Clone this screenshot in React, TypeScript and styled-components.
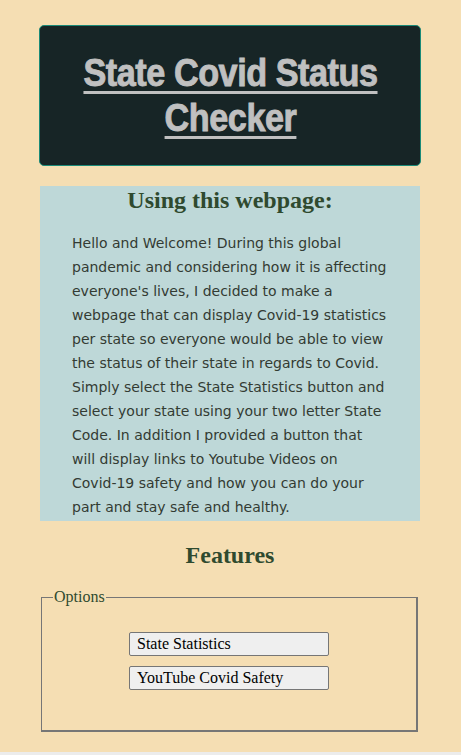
import React from "react";
import styled, { createGlobalStyle } from "styled-components";

const Global = createGlobalStyle`
  html { background: #ececec; }
  body { margin: 0; background: #ececec; }
`;

const Page = styled.div`
  background: #f5deb3;
  min-height: 752px;
  padding: 25px 40px 20px 39px;
  box-sizing: border-box;
  font-family: "Liberation Serif", "Times New Roman", serif;
`;

const Header = styled.header`
  background: #172526;
  border: 1px solid #1a8a78;
  border-radius: 5px;
  height: 141px;
  box-sizing: border-box;
  display: flex;
  align-items: center;
  justify-content: center;
`;

const Title = styled.h1`
  margin: 0;
  flex: none;
  font-family: Impact, "Liberation Sans", Arial, sans-serif;
  font-weight: bold;
  font-size: 38px;
  line-height: 45px;
  letter-spacing: -0.5px;
  color: #c0c0c0;
  -webkit-text-stroke: 0.9px #c0c0c0;
  text-decoration: underline;
  text-decoration-thickness: 3px;
  text-underline-offset: 5px;
  text-align: center;
  width: 345px;
  transform: scaleX(0.9);
`;

const Intro = styled.section`
  margin: 20px 1px 0 1px;
  background: #bed8d8;
  padding: 0 32px 0 32px;
  height: 335px;
  box-sizing: border-box;
`;

const Heading = styled.h2<{ $top?: number }>`
  margin: 0;
  font-family: "Liberation Serif", "Times New Roman", serif;
  font-weight: bold;
  font-size: 24px;
  line-height: 28px;
  color: #2f4a2f;
  text-align: center;
  padding-top: ${(p) => p.$top ?? 0}px;
`;

const Body = styled.p`
  margin: 17px 0 0 0;
  font-family: "DejaVu Sans", Verdana, sans-serif;
  font-size: 14px;
  line-height: 24px;
  color: #333b33;
`;

const Fieldset = styled.fieldset`
  margin: 19px 3px 0 2px;
  border-color: #767676;
  border-style: solid;
  border-width: 1px 2px 2px 1px;
  padding: 26px 12px 40px;
  display: flex;
  flex-direction: column;
  align-items: center;
  gap: 10px;
`;

const Legend = styled.legend`
  font-family: "Liberation Serif", "Times New Roman", serif;
  font-size: 16px;
  color: #2f4a2f;
  padding: 0 1px;
  margin-left: -1px;
`;

const OptionButton = styled.button`
  width: 200px;
  height: 24px;
  box-sizing: border-box;
  background: #efefef;
  border: 1px solid #767676;
  border-radius: 2px;
  font-family: "Liberation Serif", "Times New Roman", serif;
  font-size: 16px;
  color: #000;
  text-align: left;
  padding: 0 7px;
  line-height: 20px;
`;

export default function App() {
  return (
    <>
      <Global />
      <Page>
        <Header>
          <Title>State Covid Status Checker</Title>
        </Header>
        <Intro>
          <Heading $top={0}>Using this webpage:</Heading>
          <Body>
            Hello and Welcome! During this global pandemic and considering how it is
            affecting everyone's lives, I decided to make a webpage that can display
            Covid‑19 statistics per state so everyone would be able to view the status
            of their state in regards to Covid. Simply select the State Statistics
            button and select your state using your two letter State Code. In addition
            I provided a button that will display links to Youtube Videos on Covid‑19
            safety and how you can do your part and stay safe and healthy.
          </Body>
        </Intro>
        <Heading $top={20}>Features</Heading>
        <Fieldset>
          <Legend>Options</Legend>
          <OptionButton>State Statistics</OptionButton>
          <OptionButton>YouTube Covid Safety</OptionButton>
        </Fieldset>
      </Page>
    </>
  );
}
